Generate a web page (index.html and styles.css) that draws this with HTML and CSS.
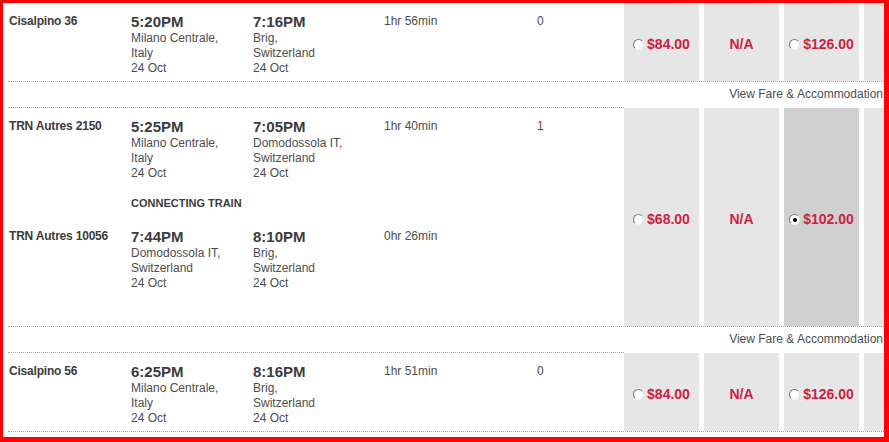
FILE: index.html
```html
<!DOCTYPE html>
<html>

<head>
    <title>Train results</title>
    <meta charset="utf-8">
    <meta name="viewport" content="width=device-width, initial-scale=1.0">
    <link rel="stylesheet" href="styles.css">
</head>

<body>
    <div class="frame">
        <div class="results">

            <div class="journey">
                <div class="legs">
                    <div class="leg">
                        <div class="train">Cisalpino 36</div>
                        <div class="stop">
                            <div class="time">5:20PM</div>
                            <div>Milano Centrale,<br>Italy</div>
                            <div>24 Oct</div>
                        </div>
                        <div class="stop">
                            <div class="time">7:16PM</div>
                            <div>Brig,<br>Switzerland</div>
                            <div>24 Oct</div>
                        </div>
                        <div class="duration">1hr 56min</div>
                        <div class="changes">0</div>
                    </div>
                </div>
                <div class="fare"><span class="radio"></span>$84.00</div>
                <div class="fare">N/A</div>
                <div class="fare"><span class="radio"></span>$126.00</div>
                <div class="fare"></div>
            </div>
            <div class="view">View Fare &amp; Accommodation</div>

            <div class="journey">
                <div class="legs multi">
                    <div class="leg">
                        <div class="train">TRN Autres 2150</div>
                        <div class="stop">
                            <div class="time">5:25PM</div>
                            <div>Milano Centrale,<br>Italy</div>
                            <div>24 Oct</div>
                        </div>
                        <div class="stop">
                            <div class="time">7:05PM</div>
                            <div>Domodossola IT,<br>Switzerland</div>
                            <div>24 Oct</div>
                        </div>
                        <div class="duration">1hr 40min</div>
                        <div class="changes">1</div>
                    </div>
                    <div class="connecting">CONNECTING TRAIN</div>
                    <div class="leg">
                        <div class="train">TRN Autres 10056</div>
                        <div class="stop">
                            <div class="time">7:44PM</div>
                            <div>Domodossola IT,<br>Switzerland</div>
                            <div>24 Oct</div>
                        </div>
                        <div class="stop">
                            <div class="time">8:10PM</div>
                            <div>Brig,<br>Switzerland</div>
                            <div>24 Oct</div>
                        </div>
                        <div class="duration">0hr 26min</div>
                        <div class="changes"></div>
                    </div>
                </div>
                <div class="fare"><span class="radio"></span>$68.00</div>
                <div class="fare">N/A</div>
                <div class="fare valgt"><span class="radio checked"></span>$102.00</div>
                <div class="fare"></div>
            </div>
            <div class="view">View Fare &amp; Accommodation</div>

            <div class="journey">
                <div class="legs">
                    <div class="leg">
                        <div class="train">Cisalpino 56</div>
                        <div class="stop">
                            <div class="time">6:25PM</div>
                            <div>Milano Centrale,<br>Italy</div>
                            <div>24 Oct</div>
                        </div>
                        <div class="stop">
                            <div class="time">8:16PM</div>
                            <div>Brig,<br>Switzerland</div>
                            <div>24 Oct</div>
                        </div>
                        <div class="duration">1hr 51min</div>
                        <div class="changes">0</div>
                    </div>
                </div>
                <div class="fare"><span class="radio"></span>$84.00</div>
                <div class="fare">N/A</div>
                <div class="fare"><span class="radio"></span>$126.00</div>
                <div class="fare"></div>
            </div>

        </div>
    </div>
</body>

</html>
```

FILE: styles.css
```css
body {
    margin: 0;
    background-color: white;
    font-family: "Liberation Sans", Arial, sans-serif;
    font-size: 12px;
    color: #4d4d4d;
}

.frame {
    height: 442px;
    box-sizing: border-box;
    border: 3px solid #ff0000;
    border-right-width: 5px;
    border-bottom-width: 5px;
    overflow: hidden;
}

.results {
    width: 936px;
    margin: -1px 0 0 5px;
}

.journey {
    display: flex;
    border-bottom: 1px dotted #a0a0a0;
}

.legs {
    width: 616px;
    flex-shrink: 0;
    box-sizing: border-box;
    border-top: 1px dotted #a0a0a0;
    padding: 10px 0 5px 1px;
}

.legs.multi {
    padding-bottom: 35px;
}

.leg {
    display: grid;
    grid-template-columns: 122px 122px 131px 153px auto;
}

.train {
    font-weight: bold;
    color: #3c3c3c;
    letter-spacing: -0.2px;
    line-height: 17px;
}

.stop {
    line-height: 15px;
}

.time {
    font-size: 15px;
    font-weight: bold;
    color: #3c3c3c;
    line-height: 18px;
}

.duration,
.changes {
    line-height: 17px;
}

.connecting {
    margin: 15px 0 17px 122px;
    font-size: 11px;
    font-weight: bold;
    color: #3c3c3c;
    line-height: 15px;
}

.fare {
    width: 75px;
    flex-shrink: 0;
    margin: 1px 5px 0 0;
    padding-top: 4px;
    box-sizing: border-box;
    background-color: #e6e6e6;
    display: flex;
    align-items: center;
    justify-content: center;
    font-size: 14px;
    font-weight: bold;
    color: #cc1f44;
}

.fare.valgt {
    background-color: #d0d0d0;
}

.radio {
    width: 9px;
    height: 9px;
    margin: 1px 3px 0 0;
    border-radius: 50%;
    border: 1px solid;
    border-color: #7a7a7a #e2e2e2 #f0f0f0 #7a7a7a;
    background-color: white;
    display: flex;
    align-items: center;
    justify-content: center;
}

.radio.checked::after {
    content: "";
    width: 4px;
    height: 4px;
    border-radius: 50%;
    background-color: black;
}

.view {
    padding: 5px 61px 5px 0;
    line-height: 15px;
    text-align: right;
    white-space: nowrap;
}
```
